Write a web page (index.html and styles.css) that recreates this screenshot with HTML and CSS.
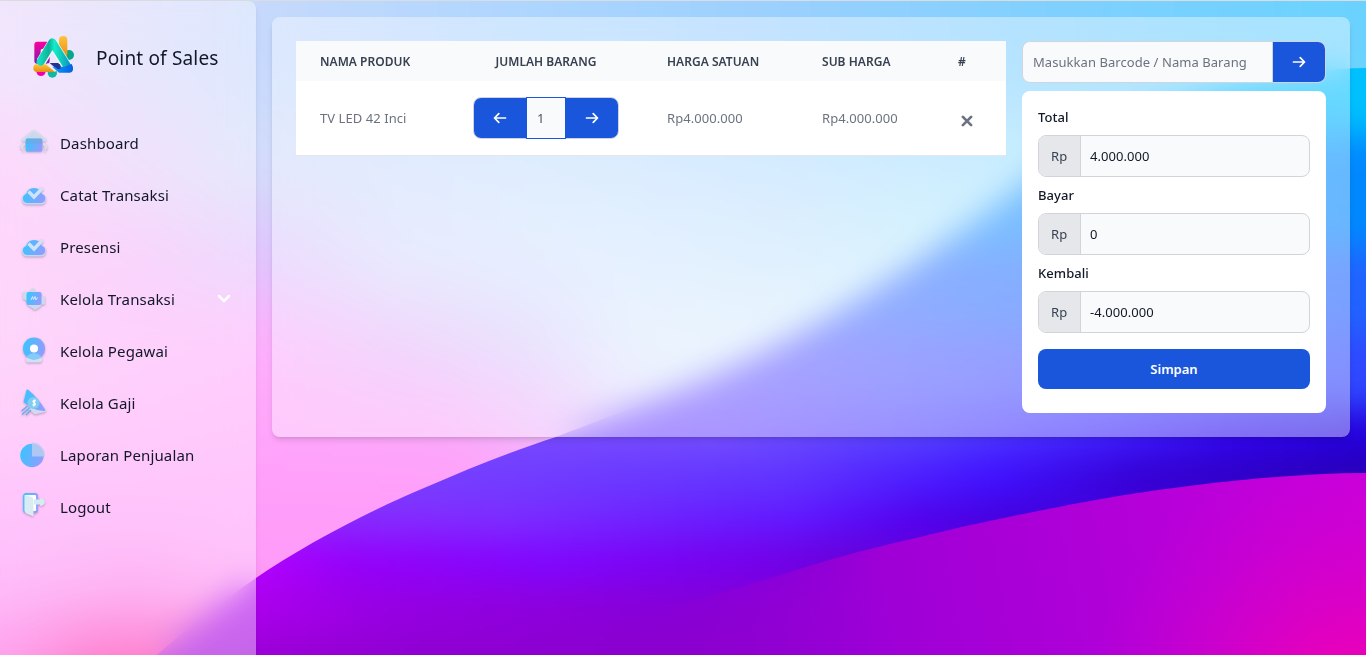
FILE: index.html
```html
<!DOCTYPE html>
<html lang="id">
<head>
<meta charset="utf-8">
<title>Point of Sales</title>
<link rel="stylesheet" href="styles.css">
</head>
<body>
<svg class="wallpaper" viewBox="0 0 1366 655" preserveAspectRatio="none" aria-hidden="true">
  <defs>
    <filter id="soft" filterUnits="userSpaceOnUse" x="-100" y="-200" width="1566" height="1055" color-interpolation-filters="sRGB"><feGaussianBlur stdDeviation="12 34"/></filter>
    <filter id="soft2" filterUnits="userSpaceOnUse" x="-100" y="-200" width="1566" height="1055" color-interpolation-filters="sRGB"><feGaussianBlur stdDeviation="12 17"/></filter>
    <clipPath id="wave"><path d="M140 670C180 634 215 606 256 578C300 548 360 515 424 488C470 468 515 450 556 437C620 412 690 388 747 360C800 335 860 300 919 260C965 228 990 210 1020 187C1100 125 1230 70 1366 68V670Z"/></clipPath>
    <linearGradient id="l1" gradientUnits="userSpaceOnUse" x1="0" x2="1366" y1="0" y2="0"><stop offset="0" stop-color="#e9d5fb"/><stop offset=".19" stop-color="#c6d9fc"/><stop offset=".38" stop-color="#aed6ff"/><stop offset=".56" stop-color="#9cd0ff"/><stop offset=".75" stop-color="#82d0ff"/><stop offset="1" stop-color="#6ad2ff"/></linearGradient>
    <linearGradient id="l2" gradientUnits="userSpaceOnUse" x1="0" x2="1366" y1="0" y2="0"><stop offset="0" stop-color="#fcbffa"/><stop offset=".09" stop-color="#e8cdfa"/><stop offset=".19" stop-color="#d3dcfb"/><stop offset=".38" stop-color="#cbe2fe"/><stop offset=".56" stop-color="#bbdfff"/><stop offset=".75" stop-color="#a4e2ff"/><stop offset="1" stop-color="#74e0ff"/></linearGradient>
    <linearGradient id="l3" gradientUnits="userSpaceOnUse" x1="0" x2="1366" y1="0" y2="0"><stop offset="0" stop-color="#ffbaf8"/><stop offset=".1" stop-color="#f6b8fa"/><stop offset=".19" stop-color="#dfc4fc"/><stop offset=".29" stop-color="#dadffd"/><stop offset=".44" stop-color="#d6e8ff"/><stop offset=".58" stop-color="#cbe6fe"/><stop offset=".7" stop-color="#bdeefd"/></linearGradient>
    <linearGradient id="l4" gradientUnits="userSpaceOnUse" x1="0" x2="1366" y1="0" y2="0"><stop offset="0" stop-color="#fcbaf8"/><stop offset=".19" stop-color="#ffaefc"/><stop offset=".29" stop-color="#e6bcfb"/><stop offset=".38" stop-color="#dad0fc"/><stop offset=".46" stop-color="#dfebfe"/><stop offset=".6" stop-color="#dbf2fe"/></linearGradient>
    <linearGradient id="l5" gradientUnits="userSpaceOnUse" x1="0" x2="1366" y1="0" y2="0"><stop offset="0" stop-color="#ffb2f8"/><stop offset=".19" stop-color="#ffa6fb"/><stop offset=".33" stop-color="#fbaafa"/><stop offset=".41" stop-color="#edc0fc"/><stop offset=".48" stop-color="#dfe8fd"/></linearGradient>
    <linearGradient id="l7" gradientUnits="userSpaceOnUse" x1="0" x2="1366" y1="0" y2="0"><stop offset="0" stop-color="#fe8ef6"/><stop offset=".1" stop-color="#fd7ee8"/><stop offset=".19" stop-color="#ff98f6"/></linearGradient>
    <linearGradient id="l8" gradientUnits="userSpaceOnUse" x1="0" x2="1366" y1="0" y2="0"><stop offset="0" stop-color="#ff50d8"/><stop offset=".07" stop-color="#ff0090"/><stop offset=".15" stop-color="#ff0088"/></linearGradient>
    <linearGradient id="b2" gradientUnits="userSpaceOnUse" x1="900" x2="1366" y1="0" y2="0"><stop offset="0" stop-color="#2c98ff"/><stop offset="1" stop-color="#0088ff"/></linearGradient>
    <linearGradient id="b3" gradientUnits="userSpaceOnUse" x1="740" x2="1366" y1="0" y2="0"><stop offset="0" stop-color="#6078ff"/><stop offset=".4" stop-color="#3878ff"/><stop offset="1" stop-color="#2062ff"/></linearGradient>
    <linearGradient id="b4" gradientUnits="userSpaceOnUse" x1="600" x2="1366" y1="0" y2="0"><stop offset="0" stop-color="#8464ff"/><stop offset=".4" stop-color="#5a64ff"/><stop offset="1" stop-color="#2e48ff"/></linearGradient>
    <linearGradient id="b5" gradientUnits="userSpaceOnUse" x1="500" x2="1366" y1="0" y2="0"><stop offset="0" stop-color="#7848ff"/><stop offset=".25" stop-color="#744eff"/><stop offset=".5" stop-color="#5240ff"/><stop offset=".7" stop-color="#3e20ff"/><stop offset=".85" stop-color="#3004ee"/><stop offset="1" stop-color="#2400dc"/></linearGradient>
    <linearGradient id="b6" gradientUnits="userSpaceOnUse" x1="400" x2="1366" y1="0" y2="0"><stop offset="0" stop-color="#7840ff"/><stop offset=".4" stop-color="#6034ff"/><stop offset=".62" stop-color="#4010ff"/><stop offset=".76" stop-color="#3600d4"/><stop offset="1" stop-color="#2800b4"/></linearGradient>
    <linearGradient id="b7" gradientUnits="userSpaceOnUse" x1="300" x2="1000" y1="0" y2="0"><stop offset="0" stop-color="#8c28ff"/><stop offset=".3" stop-color="#7c2cff"/><stop offset=".72" stop-color="#6016ff"/><stop offset=".88" stop-color="#5200ee"/><stop offset="1" stop-color="#4400dc"/></linearGradient>
    <linearGradient id="b8" gradientUnits="userSpaceOnUse" x1="256" x2="850" y1="0" y2="0"><stop offset="0" stop-color="#b400ff"/><stop offset=".15" stop-color="#9600fa"/><stop offset=".5" stop-color="#8006ff"/><stop offset=".85" stop-color="#7400ea"/><stop offset="1" stop-color="#6800d8"/></linearGradient>
    <linearGradient id="b9" gradientUnits="userSpaceOnUse" x1="220" x2="700" y1="0" y2="0"><stop offset="0" stop-color="#b000ee"/><stop offset=".35" stop-color="#9600e2"/><stop offset="1" stop-color="#8400d6"/></linearGradient>
    <linearGradient id="b10" gradientUnits="userSpaceOnUse" x1="150" x2="700" y1="0" y2="0"><stop offset="0" stop-color="#a200d8"/><stop offset=".5" stop-color="#8e00d0"/><stop offset="1" stop-color="#8a00cc"/></linearGradient>
    <linearGradient id="m1" gradientUnits="userSpaceOnUse" x1="600" x2="1366" y1="655" y2="520"><stop offset="0" stop-color="#8c00ce"/><stop offset=".35" stop-color="#9c00d6"/><stop offset=".65" stop-color="#b000d8"/><stop offset="1" stop-color="#c800dc"/></linearGradient>
    <radialGradient id="m2" gradientUnits="userSpaceOnUse" cx="1350" cy="710" r="260"><stop offset="0" stop-color="#f800ac"/><stop offset="1" stop-color="#d400c8" stop-opacity="0"/></radialGradient>
    <linearGradient id="fade" gradientUnits="userSpaceOnUse" x1="610" x2="880" y1="0" y2="0"><stop offset="0" stop-color="#000"/><stop offset="1" stop-color="#fff"/></linearGradient>
    <mask id="fadeMask" maskUnits="userSpaceOnUse" x="500" y="400" width="900" height="300"><rect x="500" y="400" width="900" height="300" fill="url(#fade)"/></mask>
  </defs>
  <g filter="url(#soft)">
    <rect x="-100" y="-200" width="1600" height="310" fill="url(#l1)"/>
    <rect x="-100" y="110" width="1600" height="100" fill="url(#l2)"/>
    <rect x="-100" y="210" width="1600" height="90" fill="url(#l3)"/>
    <rect x="-100" y="300" width="1600" height="80" fill="url(#l4)"/>
    <rect x="-100" y="380" width="1600" height="80" fill="url(#l5)"/>
    <rect x="-100" y="460" width="1600" height="100" fill="#ff9efa"/>
    <rect x="-100" y="560" width="1600" height="82" fill="url(#l7)"/>
    <rect x="-100" y="642" width="1600" height="240" fill="url(#l8)"/>
  </g>
  <g clip-path="url(#wave)">
    <g filter="url(#soft2)">
      <rect x="-100" y="-100" width="1600" height="235" fill="#00c0ff"/>
      <rect x="-100" y="135" width="1600" height="115" fill="url(#b2)"/>
      <rect x="-100" y="250" width="1600" height="85" fill="url(#b3)"/>
      <rect x="-100" y="335" width="1600" height="75" fill="url(#b4)"/>
      <rect x="-100" y="410" width="1600" height="45" fill="url(#b5)"/>
      <rect x="-100" y="455" width="1600" height="45" fill="url(#b6)"/>
      <rect x="-100" y="500" width="1600" height="40" fill="url(#b7)"/>
      <rect x="-100" y="540" width="1600" height="45" fill="url(#b8)"/>
      <rect x="-100" y="585" width="1600" height="50" fill="url(#b9)"/>
      <rect x="-100" y="635" width="1600" height="200" fill="url(#b10)"/>
    </g>
  </g>
  <g mask="url(#fadeMask)">
    <path d="M600 626C680 604 740 588 806 567C860 550 900 542 949 530C1000 518 1100 498 1145 492C1200 484 1290 473 1366 473V660H600Z" fill="url(#m1)"/>
    <path d="M1020 516C1060 507 1100 498 1145 492C1200 484 1290 473 1366 473V660H1020Z" fill="url(#m2)"/>
  </g>
</svg>

<svg class="defs" aria-hidden="true">
  <defs>
    <linearGradient id="ic" x1="0" y1="0" x2="1" y2=".3"><stop offset="0" stop-color="#30c9ff"/><stop offset="1" stop-color="#8c9eff"/></linearGradient>
    <symbol id="cloud" viewBox="0 0 28 28"><path d="M6.500 23.500a5.300 5.300 0 0 1-1-10.200a9 9 0 0 1 17 0a5.300 5.300 0 0 1-.8 10.200z" fill="#c4d8f2"/><path d="M6.800 22a4.700 4.700 0 0 1-.6-9.100a8.200 8.200 0 0 1 15.800 0a4.700 4.700 0 0 1-.7 9.100z" fill="url(#ic)"/><path d="M8.500 10.500l5.500 5.500 8.600-9" fill="none" stroke="#cfe3f8" stroke-width="3.400"/></symbol>
    <symbol id="arrow" viewBox="0 0 14 14"><path d="M1.500 7h11M8.200 2.700L12.500 7l-4.300 4.300" fill="none" stroke="#fff" stroke-width="1.700" stroke-linecap="round" stroke-linejoin="round"/></symbol>
  </defs>
</svg>

<div class="page">
  <aside class="sidebar">
    <div class="brand">
      <svg class="logo" viewBox="0 0 126 126">
        <defs>
          <linearGradient id="g1" x1="0" y1="0" x2="0" y2="1"><stop offset="0" stop-color="#ff009c"/><stop offset="1" stop-color="#7a1bb0"/></linearGradient>
          <linearGradient id="g2" gradientUnits="userSpaceOnUse" x1="20" y1="90" x2="112" y2="90"><stop offset="0" stop-color="#10e0bc"/><stop offset=".3" stop-color="#10b09a"/><stop offset=".48" stop-color="#14ecca"/><stop offset=".72" stop-color="#10c8b8"/><stop offset="1" stop-color="#0890d0"/></linearGradient>
          <linearGradient id="g3" x1="0" y1="0" x2="0" y2="1"><stop offset="0" stop-color="#fdc43c"/><stop offset="1" stop-color="#e88c10"/></linearGradient>
          <linearGradient id="g4" gradientUnits="userSpaceOnUse" x1="60" y1="0" x2="120" y2="0"><stop offset="0" stop-color="#0898f8"/><stop offset="1" stop-color="#0860e0"/></linearGradient>
        </defs>
        <circle cx="108" cy="57" r="15" fill="#08a88c"/>
        <circle cx="24" cy="106" r="14" fill="#f000b0"/>
        <circle cx="58" cy="111" r="14" fill="#10b8a0"/>
        <rect x="4" y="17" width="46" height="66" rx="9" fill="url(#g1)"/>
        <rect x="78" y="0" width="25" height="64" rx="12" fill="url(#g3)"/>
        <path d="M23 52V45q0-7 8-7h5z" fill="#fff"/>
        <path d="M10 85H42L66 108H12a11 11 0 0 1-11-11q0-12 9-12z" fill="url(#g3)"/>
        <path d="M50 81h26l14 22H76z" fill="#283090"/>
        <path d="M42 84L68 106" stroke="#eef0fc" stroke-width="6"/>
        <path d="M24 78L58 21L102 92" fill="none" stroke="#eef4fc" stroke-width="30" stroke-linejoin="round"/>
        <path d="M56 84h24l10 20H78z" fill="#283090"/>
        <path d="M23 77L58 19L106 96" fill="none" stroke="url(#g2)" stroke-width="24" stroke-linejoin="round" stroke-linecap="round"/>
        <path d="M58 92H94L116 84q5 8 4 17q-2 9-11 9H78z" fill="url(#g4)"/>
        <path d="M52 82h20l12 17H74z" fill="#283090"/>
      </svg>
      <span class="brand-name">Point of Sales</span>
    </div>
    <nav class="menu">
      <a class="item"><svg class="icon" viewBox="0 0 28 28"><path d="M.8 16l4.200-2.500V16L3.500 18v6.500l-1.500-4-1.500-1zM27.200 16L23 13.500V16l1.500 2v6.500l1.500-4 1.500-1z" fill="#dcdcec"/><path d="M14 1q1 0 2 1l10 8q1 2.500-1 2.500H3Q1 12.500 2 10l10-8q1-1 2-1z" fill="#cfe0f0" opacity=".85"/><rect x="5.700" y="9.500" width="16.600" height="13" rx="1.500" fill="url(#ic)"/><path d="M5.700 11q0-1.500 1.500-1.500h13.600q1.500 0 1.500 1.500v4H5.700z" fill="#6fa8d8" opacity=".55"/></svg><span>Dashboard</span></a>
      <a class="item"><svg class="icon"><use href="#cloud"/></svg><span>Catat Transaksi</span></a>
      <a class="item"><svg class="icon"><use href="#cloud"/></svg><span>Presensi</span></a>
      <a class="item"><svg class="icon" viewBox="0 0 28 28"><path d="M3 7h6l4-4 3 4h5v4l4 .500v8h-3l-2 2.500-5 3-6-4H8v-5l-5-2z" fill="#cdd9ee"/><rect x="6.500" y="7" width="15" height="13" rx="2" fill="url(#ic)"/><path d="M11 15l1.500-3.500 1 3 1.500-3 1 3.500 1.500-2.500" fill="none" stroke="#d4ecff" stroke-width="1"/></svg><span>Kelola Transaksi</span><svg class="chevron" viewBox="0 0 14 10"><path d="M2 2l5 5 5-5" fill="none" stroke="#fff" stroke-width="2.500" stroke-linecap="round" stroke-linejoin="round"/></svg></a>
      <a class="item"><svg class="icon" viewBox="0 0 28 28"><path d="M6 21q8-4 16 0v2.500q0 2-2 2H8q-2 0-2-2z" fill="#d3dff2"/><circle cx="14" cy="11.500" r="11" fill="url(#ic)"/><path d="M6.500 19.500q7.500-7 15 0a11 11 0 0 1-15 0z" fill="#82ccf8"/><circle cx="14" cy="11.500" r="4" fill="#fff"/></svg><span>Kelola Pegawai</span></a>
      <a class="item"><svg class="icon" viewBox="0 0 28 28"><path d="M7 19l16-2 3 4q1 1-1 2l-10 2.500z" fill="#d2d8ee"/><path d="M6.500 1q1-1 2 0Q18 9 25 20.500q.8 1.500-1 1.500-7-.5-12-3L3.500 13z" fill="url(#ic)"/><path d="M1.500 22l6-5M2 25.500l8-7M6 26l5-5" stroke="#62b0ee" stroke-width="1.300"/><circle cx="13.500" cy="14" r="6" fill="#7fcdf3"/><path d="M16 11.800q-3-1-3 .7c0 1.700 2.600 1 2.300 2.700q-.5 1.600-3 .6M15 10.500l-1.500 7" fill="none" stroke="#fff" stroke-width="1.200"/></svg><span>Kelola Gaji</span></a>
      <a class="item"><svg class="icon flat" viewBox="0 0 28 28"><circle cx="12" cy="14.500" r="11.800" fill="url(#ic)"/><path d="M12 1.500a13 13 0 0 1 13 14H12z" fill="#b9cdf0" opacity=".85"/></svg><span>Laporan Penjualan</span></a>
      <a class="item"><svg class="icon" viewBox="0 0 28 28"><rect x="4" y="1" width="13" height="18" rx="2" fill="#fff" stroke="url(#ic)" stroke-width="1.800"/><path d="M4.500 2l7 2q2 1 2 3v16.500l-7-3q-2-1-2-3z" fill="#d9ecf4"/><path d="M14 6.500h6v-1.500q4 0 5 4-1 4-5 4v-1.500h-6z" fill="#d5ebf4"/></svg><span>Logout</span></a>
    </nav>
  </aside>

  <main class="content">
    <section class="panel">
      <div class="cart">
        <table class="table">
          <colgroup><col class="c1"><col class="c2"><col class="c3"><col class="c4"><col class="c5"></colgroup>
          <thead><tr><th>NAMA PRODUK</th><th class="center">JUMLAH BARANG</th><th>HARGA SATUAN</th><th>SUB HARGA</th><th>#</th></tr></thead>
          <tbody><tr>
            <td>TV LED 42 Inci</td>
            <td class="center"><div class="stepper"><button class="step left"><svg class="arrow flip"><use href="#arrow"/></svg></button><span class="qty">1</span><button class="step right"><svg class="arrow"><use href="#arrow"/></svg></button></div></td>
            <td>Rp4.000.000</td><td>Rp4.000.000</td>
            <td><svg class="remove" viewBox="0 0 12 12"><path d="M1.900 1.900l8.200 8.200M10.100 1.900l-8.200 8.200" stroke="#6b7280" stroke-width="2.700" stroke-linecap="round"/></svg></td>
          </tr></tbody>
        </table>
      </div>
      <div class="checkout">
        <div class="search"><span class="placeholder">Masukkan Barcode / Nama Barang</span><button class="go"><svg class="arrow"><use href="#arrow"/></svg></button></div>
        <div class="card">
          <label class="label">Total</label>
          <div class="field"><span class="prefix">Rp</span><span class="value">4.000.000</span></div>
          <label class="label">Bayar</label>
          <div class="field"><span class="prefix">Rp</span><span class="value">0</span></div>
          <label class="label">Kembali</label>
          <div class="field"><span class="prefix">Rp</span><span class="value">-4.000.000</span></div>
          <button class="save">Simpan</button>
        </div>
      </div>
    </section>
  </main>
</div>
</body>
</html>
```

FILE: styles.css
```css
* { box-sizing: border-box; }
body {
  margin: 0;
  height: 655px;
  overflow: hidden;
  font-family: "Noto Sans", "Open Sans", sans-serif;
  font-size: 13px;
  letter-spacing: .06px;
  color: #111827;
}
button { font: inherit; border: 0; padding: 0; margin: 0; }
.wallpaper { position: fixed; inset: 0; width: 1366px; height: 655px; z-index: -1; }
.defs { position: absolute; width: 0; height: 0; }
.page { display: flex; height: 655px; border-top: 1px solid #dadcdf; }

.sidebar {
  width: 256px;
  height: 655px;
  flex: none;
  padding: 34px 16px 0;
  border-top-right-radius: 8px;
  background: rgba(255, 255, 255, .4);
  backdrop-filter: blur(16px);
  box-shadow: 0 4px 6px -1px rgba(0, 0, 0, .1), 0 2px 4px -2px rgba(0, 0, 0, .1);
}
.brand { display: flex; align-items: center; gap: 21px; height: 46px; padding-left: 17px; }
.logo { width: 42px; height: 42px; flex: none; margin-top: -2px; }
.brand-name { font-size: 19px; letter-spacing: .17px; white-space: nowrap; }
.menu { display: flex; flex-direction: column; gap: 8px; padding-top: 40px; }
.item { display: flex; align-items: center; height: 44px; padding: 0 9px 0 4px; font-size: 15px; letter-spacing: .14px; font-weight: 450; white-space: nowrap; }
.icon { width: 28px; height: 28px; margin-right: 12px; flex: none; filter: drop-shadow(0 1.500px 1px rgba(60, 50, 90, .35)); }
.flat { filter: none; }
.chevron { width: 14px; height: 10px; margin-left: auto; }

.content { flex: 1; padding: 16px; }
.panel {
  display: flex;
  gap: 16px;
  height: 420px;
  padding: 24px;
  border-radius: 8px;
  background: rgba(255, 255, 255, .4);
  backdrop-filter: blur(16px);
  box-shadow: 0 4px 6px -1px rgba(0, 0, 0, .12), 0 2px 4px -2px rgba(0, 0, 0, .1);
}
.cart { width: 710px; flex: none; }
.table { width: 710px; table-layout: fixed; border-collapse: collapse; color: #6b7280; }
.c1 { width: 154px; }
.c2 { width: 193px; }
.c3 { width: 155px; }
.c4 { width: 136px; }
.c5 { width: 72px; }
th { height: 40px; padding: 0 0 0 24px; background: #f9fafb; color: #374151; font-size: 12px; letter-spacing: .03px; font-weight: 600; text-align: left; white-space: nowrap; }
th.center { padding: 0 1px 0 0; text-align: center; }
td { height: 74px; padding: 0 0 0 24px; background: #fff; border-bottom: 1px solid #e5e7eb; white-space: nowrap; }
td.center { padding-left: 23px; }
.stepper { display: flex; align-items: center; width: 146px; height: 42px; border: 1px solid #d1d5db; border-radius: 8px; background: #f9fafb; }
.step { display: flex; align-items: center; justify-content: center; flex: 1; height: 40px; background: #1a56db; }
.left { border-radius: 7px 0 0 7px; }
.right { border-radius: 0 7px 7px 0; }
.qty { width: 40px; height: 42px; padding-left: 10px; line-height: 40px; border: 1px solid #1a56db; background: #f9fafb; color: #4b5563; }
.arrow { width: 14px; height: 14px; display: block; }
.flip { transform: scaleX(-1); }
.remove { display: block; width: 12px; height: 12px; margin: 6px 0 0 3px; }

.checkout { width: 304px; flex: none; }
.search { display: flex; height: 42px; border: 1px solid #d1d5db; border-radius: 8px; overflow: hidden; background: #f9fafb; }
.placeholder { flex: 1; padding-left: 10px; line-height: 40px; border-right: 1px solid #d1d5db; color: #6b7280; white-space: nowrap; }
.go { display: flex; align-items: center; justify-content: center; width: 52px; background: #1a56db; }
.card { margin-top: 8px; height: 322px; padding: 16px; border-radius: 8px; background: #fff; }
.label { display: block; line-height: 20px; margin-bottom: 8px; font-weight: 500; }
.field { display: flex; height: 42px; margin-bottom: 8px; line-height: 40px; border: 1px solid #d1d5db; border-radius: 8px; overflow: hidden; background: #f9fafb; }
.prefix { width: 42px; padding-left: 12px; border-right: 1px solid #d1d5db; background: #e5e7eb; color: #374151; }
.value { padding-left: 9px; }
.save { width: 100%; height: 40px; margin-top: 8px; border-radius: 8px; background: #1a56db; color: #fff; font-weight: 600; }
```
